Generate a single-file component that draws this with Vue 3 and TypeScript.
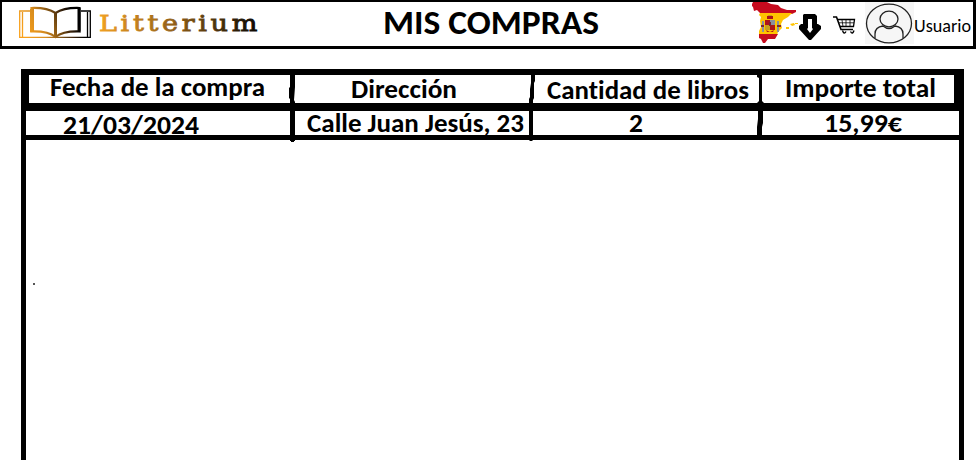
<script setup lang="ts">
interface Label {
  text: string
  x: number
  y: number
  width: number
}

// Text positions are relative to the cell that holds each label.
const headers: Label[] = [
  { text: 'Fecha de la compra', x: 24, y: 21, width: 215 },
  { text: 'Dirección', x: 56, y: 23, width: 106 },
  { text: 'Cantidad de libros', x: 12, y: 24, width: 202 },
  { text: 'Importe total', x: 22, y: 22, width: 151 },
]

const purchase: Label[] = [
  { text: '21/03/2024', x: 37, y: 23, width: 136 },
  { text: 'Calle Juan Jesús, 23', x: 12, y: 21, width: 217 },
  { text: '2', x: 94, y: 21, width: 14 },
  { text: '15,99€', x: 61, y: 21, width: 78 },
]

// Hand-drawn column separators
const dividers: string[] = [
  'M1 0H6V12L5 25L6 27V66H5V67H2V66H1V24L0 23V13L1 12Z',
  'M2 0H6V6L5 8V23L4 25V65L3 66H1L0 65V24L1 22V14L2 8Z',
  'M0 0H5V26L7 28V34L6 36V48L5 52V60H0V52L1 44V36L0 34V28L2 26V3L0 2Z',
]
</script>

<template>
  <div class="page">
    <header class="topbar">
      <svg class="brand" width="260" height="44" viewBox="0 0 260 44">
        <defs>
          <linearGradient id="book" gradientUnits="userSpaceOnUse" x1="22" y1="32" x2="76" y2="6">
            <stop offset="0" stop-color="#f9a11c" />
            <stop offset=".3" stop-color="#d98d1d" />
            <stop offset=".72" stop-color="#3b240c" />
            <stop offset=".88" stop-color="#000" />
          </linearGradient>
          <linearGradient id="word" gradientUnits="userSpaceOnUse" x1="98" y1="0" x2="258" y2="0">
            <stop offset="0" stop-color="#f0a022" />
            <stop offset=".45" stop-color="#946117" />
            <stop offset="1" stop-color="#080500" />
          </linearGradient>
        </defs>
        <g fill="none" stroke="url(#book)">
          <path stroke-width="1.300" d="M28 9H17.700V35.400H88.300V9H79M20.500 10V35M85.500 10V35" />
          <path stroke-width="2.200" d="M53.500 11Q45 5.500 29.500 6V29.500Q46 29 53.500 35Q61 29 77.500 29.500V6Q62 5.500 53.500 11Z" />
          <path stroke-width="4" d="M30 7V30" />
          <path stroke-width="3" d="M53.500 11V34.500M77 6V29.500" />
        </g>
        <text class="wordmark" x="97" y="28.500" textLength="162" lengthAdjust="spacingAndGlyphs">Litterium</text>
      </svg>

      <svg class="title" width="218" height="44">
        <text x="0" y="32" textLength="216" lengthAdjust="spacingAndGlyphs">MIS COMPRAS</text>
      </svg>

      <div class="tools">
        <svg class="flag" width="46" height="44" viewBox="0 0 46 44">
          <path fill="#c60b1e" d="M1 0H15L19 2L26 3L29 6L35 8L44 8V10L40 12L8 11L5 8L2 9L1 5L0 4V2Z" />
          <path fill="#ffc400" d="M8 11H40L36 15L31 18L29 22L30 26L26 30L25 33H7V29L9 25L8 19L9 15L7 13Z" />
          <path fill="#c60b1e" d="M7 32H26L23 37L16 37L13 41H11L9 37L7 36Z" />
          <path fill="#ffc400" d="M38 22l4-1 1 2-3 1zM43 21h3v1h-3zM34 25h3v2h-3z" />
          <path fill="#ad1519" d="M15 14h6v3h-6zM13 18h5v5h-5zM18 23h5v5h-5zM14 28l4 2 4-2-1 2h-6z" />
          <path fill="#8b8f9d" d="M18 18h5v5h-5zM10 19h2v11h-2zM25 19h2v11h-2z" />
          <path fill="#c7a21a" d="M13 23h5v5h-5zM16 13h4v1h-4z" />
          <path fill="#7b2730" d="M9 23h3v2h-3zM25 23h4v2h-4zM17 20h2v4h-2z" />
        </svg>
        <svg class="arrow" width="22" height="27" viewBox="0 0 22 27">
          <path d="M5 0H16L18 2V10H19L22 12V15L12 26H10L0 15V12L2 10H4V1Z" />
          <path fill="#fff" d="M9 5H13V14L14 15L11 19L8 15L9 14Z" />
        </svg>
        <svg class="cart" width="23" height="19" viewBox="0 0 23 19">
          <g fill="none" stroke="#000">
            <path stroke-width="1.600" d="M0 1H3.500L8 13.500H20" />
            <path stroke-width="1.300" d="M4.500 3.500H21.500L20.500 10.500H7" />
            <path stroke-width=".8" d="M6 6.800H21M9 4L10 10.500M13 4V10.500M17 4V10.500" />
            <path stroke-width="1.400" d="M9.500 14.500Q11 19 13 15.500M17.500 15.500Q19.500 19 21 14.500" />
          </g>
        </svg>
        <div class="avatar">
          <svg width="48" height="42" viewBox="0 0 48 42">
            <g fill="none" stroke="#222" stroke-width="1.300">
              <ellipse cx="24" cy="21.500" rx="22.500" ry="19.300" />
              <ellipse cx="24" cy="17" rx="9" ry="7.800" />
              <path d="M10 36V32Q10 25 18 24Q24 29 30 24Q38 25 38 32V36" />
            </g>
          </svg>
        </div>
        <svg class="user" width="59" height="44">
          <text x="0" y="30" textLength="57" lengthAdjust="spacingAndGlyphs">Usuario</text>
        </svg>
      </div>
    </header>

    <main class="purchases">
      <div class="grid">
        <div v-for="(label, i) in headers" :key="label.text" class="cell head" :class="'col' + i">
          <svg class="label">
            <text :x="label.x" :y="label.y" :textLength="label.width" lengthAdjust="spacingAndGlyphs">{{ label.text }}</text>
          </svg>
        </div>
        <div class="rule heavy"></div>
        <div v-for="(label, i) in purchase" :key="label.text" class="cell item" :class="'col' + i">
          <svg class="label">
            <text :x="label.x" :y="label.y" :textLength="label.width" lengthAdjust="spacingAndGlyphs">{{ label.text }}</text>
          </svg>
        </div>
        <div class="rule light"></div>
        <svg v-for="(path, i) in dividers" :key="path" class="divider" :class="'div' + i" width="6" height="67">
          <path :d="path" />
        </svg>
      </div>
      <span class="dot"></span>
    </main>
  </div>
</template>

<style>
body {
  margin: 0;
  background: #fff;
}
</style>

<style scoped>
.page {
  width: 979px;
  height: 460px;
  overflow: hidden;
  font-family: Carlito, Lato, sans-serif;
  font-variant-ligatures: none;
  color: #000;
}
svg {
  display: block;
  flex: none;
}
.topbar {
  box-sizing: border-box;
  display: flex;
  width: 976px;
  height: 49px;
  border: solid #000;
  border-width: 2px 3px 3px 2px;
}
.wordmark {
  font: 22px "DejaVu Serif", serif;
  letter-spacing: 3px;
  fill: url(#word);
  stroke: url(#word);
  stroke-width: 0.8;
}
.title {
  margin-left: 121px;
  font-size: 34.67px;
  font-weight: 700;
}
.tools {
  display: flex;
  margin-left: 151px;
}
.arrow {
  margin: 12px 0 0 1px;
}
.cart {
  margin: 14px 0 0 12px;
}
.avatar {
  width: 49px;
  height: 42px;
  margin-left: 9px;
  background: #f6f6f6;
}
.user {
  font-size: 18px;
}
.purchases {
  box-sizing: border-box;
  width: 943px;
  height: 391px;
  margin: 20px 0 0 21px;
  border: solid #000;
  border-width: 6px 5px 0;
}
.grid {
  display: grid;
  grid-template-columns: 263px 6px 234px 6px 222px 6px 196px;
  grid-template-rows: 28px 8px 24px 5px;
}
.cell {
  box-sizing: border-box;
  font-size: 26.67px;
  font-weight: 700;
}
.head {
  grid-row: 1;
}
.item {
  grid-row: 3;
}
.col0 {
  grid-column: 1;
}
.col1 {
  grid-column: 3;
}
.col2 {
  grid-column: 5;
}
.col3 {
  grid-column: 7;
}
.head.col0 {
  box-shadow: inset 3px 0 #000;
}
.head.col3 {
  box-shadow: inset -5px 0 #000;
}
.label {
  width: 100%;
  height: 100%;
  overflow: visible;
}
.rule {
  grid-column: 1 / -1;
  background: #000;
}
.heavy {
  grid-row: 2;
}
.light {
  grid-row: 4;
}
.divider {
  grid-row: 1 / 5;
  height: 67px;
  margin-bottom: -4px;
  overflow: visible;
}
.div0 {
  grid-column: 2;
}
.div1 {
  grid-column: 4;
}
.div2 {
  grid-column: 6;
}
.dot {
  display: block;
  width: 2px;
  height: 2px;
  margin: 143px 0 0 7px;
  background: #555;
}
</style>
